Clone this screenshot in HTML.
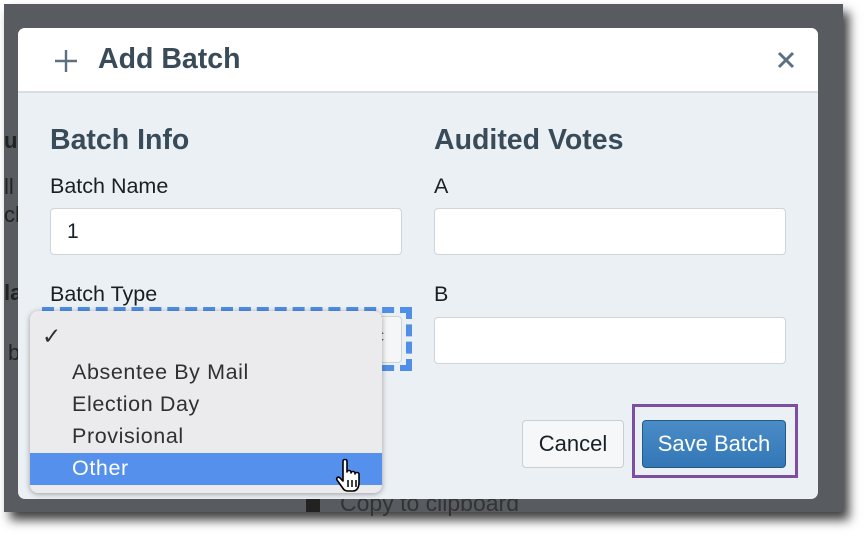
<!DOCTYPE html>
<html><head><style>
*{box-sizing:border-box;margin:0;padding:0}
body{width:866px;height:536px;background:#fff;position:relative;overflow:hidden;font-family:"Liberation Sans",Arial,sans-serif}
.bg{position:absolute;left:4px;top:4px;width:839px;height:508px;background:#585c60;box-shadow:6px 8px 10px rgba(0,0,0,.75)}
.bgt{position:absolute;color:#222;font-size:22px}
.modal{position:absolute;left:18px;top:28px;width:800px;height:471px;background:#ebf0f4;border-radius:7px;overflow:hidden}
.hdr{height:65px;background:#fff;border-bottom:2px solid #d9dde1;position:relative}
.hdr .t{position:absolute;left:80px;top:15px;font-size:28.5px;font-weight:bold;color:#394b59}
.plus{position:absolute;left:36px;top:21px}
.x{position:absolute;left:759px;top:23px}
h2{position:absolute;font-size:28.5px;font-weight:bold;color:#394b59}
.lbl{position:absolute;font-size:21.5px;color:#182026}
.inp{position:absolute;background:#fff;border:1px solid #cfd4d8;border-radius:4px;height:47px}
.btn{position:absolute;border-radius:4px;font-size:22px;text-align:center}
.menu{position:absolute;left:30px;top:311px;width:352px;height:182px;background:#ebebed;border-radius:8px;box-shadow:0 1px 6px rgba(0,0,0,.35);font-size:21.5px;color:#303030;letter-spacing:.6px}
.menu div{position:absolute;left:42px}
</style></head><body>
<div class="bg"></div>
<div class="bgt" style="left:4px;top:128px;font-weight:bold">u</div>
<div class="bgt" style="left:4px;top:174px">ll</div>
<div class="bgt" style="left:4px;top:202px">ch</div>
<div class="bgt" style="left:4px;top:280px;font-weight:bold">la</div>
<div class="bgt" style="left:8px;top:340px">b</div>
<div style="position:absolute;left:306px;top:499px;width:14px;height:13px;background:#222"></div>
<div class="bgt" style="left:340px;top:490px;color:#333;font-size:23px">Copy to clipboard</div>
<div class="modal">
 <div class="hdr">
  <svg class="plus" width="24" height="24"><path d="M12 1V23M1 12H23" stroke="#5c7080" stroke-width="2.4"/></svg>
  <div class="t">Add Batch</div>
  <svg class="x" width="18" height="18"><path d="M2 2L16 16M16 2L2 16" stroke="#5c7080" stroke-width="3"/></svg>
 </div>
 <h2 style="left:32px;top:96px">Batch Info</h2>
 <h2 style="left:416px;top:96px">Audited Votes</h2>
 <div class="lbl" style="left:32px;top:146px">Batch Name</div>
 <div class="lbl" style="left:416px;top:146px">A</div>
 <div class="inp" style="left:32px;top:180px;width:352px"><span style="position:absolute;left:16px;top:11px;font-size:21px;color:#182026">1</span></div>
 <div class="inp" style="left:416px;top:180px;width:352px"></div>
 <div class="lbl" style="left:32px;top:254px">Batch Type</div>
 <div class="lbl" style="left:416px;top:254px">B</div>
 <div style="position:absolute;left:24px;top:279px;width:370px;height:64px;border:6px dashed #4f8fe8"></div>
 <div class="inp" style="left:36px;top:288px;width:348px;height:47px;background:#f5f6f7"><span style="position:absolute;right:14px;top:10px;font-size:18px;color:#555">⬍</span></div>
 <div class="inp" style="left:416px;top:289px;width:352px"></div>
 <div style="position:absolute;left:614px;top:376px;width:166px;height:74px;border:3px solid #7d4fa0"></div>
 <div class="btn" style="left:504px;top:392px;width:102px;height:48px;background:#f6f7f8;border:1px solid #c9ced2;line-height:46px;color:#182026">Cancel</div>
 <div class="btn" style="left:624px;top:392px;width:144px;height:48px;background:linear-gradient(#4a8cc6,#3377b8);border:1px solid #22598a;line-height:46px;color:#fff">Save Batch</div>
</div>
<div class="menu">
 <div style="left:12px;top:12px;font-size:23px">✓</div>
 <div style="top:49px">Absentee By Mail</div>
 <div style="top:81px">Election Day</div>
 <div style="top:113px">Provisional</div>
 <div style="left:0;top:142px;width:352px;height:32px;background:#5591ec"></div>
 <div style="top:145px;color:#fff">Other</div>
</div>
<svg style="position:absolute;left:334px;top:458px" width="32" height="36" viewBox="0 0 32 36"><path d="M9 3c0-2 4-2 4 0v11c0-2 4-2 4 0v1c0-2 4-2 4 0v1c0-2 4-2 4 0v9c0 4-2 8-6 8h-5c-3 0-4-1-6-4l-5-7c-1-2 1-4 3-2l3 3z" fill="#fff" stroke="#000" stroke-width="1.6" stroke-linejoin="round"/><path d="M14 22v7M18 22v7M22 22v7" stroke="#000" stroke-width="1.5"/></svg>
</body></html>
